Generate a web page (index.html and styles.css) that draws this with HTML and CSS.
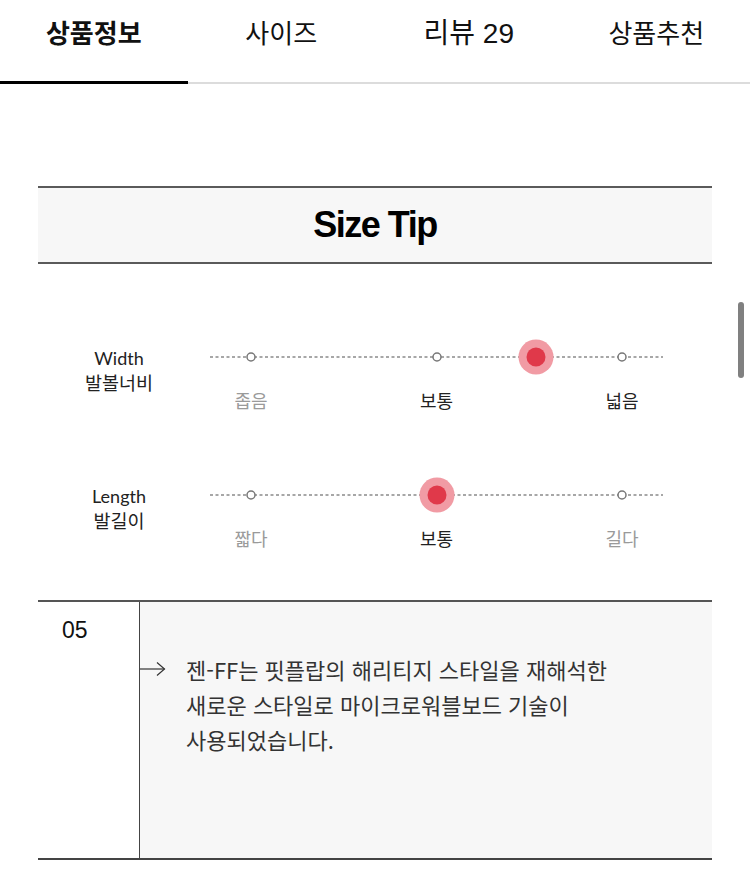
FILE: index.html
```html
<!DOCTYPE html>
<html lang="ko">
<head>
<meta charset="utf-8">
<link rel="stylesheet" href="styles.css">
</head>
<body>
<nav class="tabs">
  <div class="tab active">상품정보</div>
  <div class="tab">사이즈</div>
  <div class="tab"><span class="lat">리뷰 29</span></div>
  <div class="tab">상품추천</div>
</nav>

<section class="tip-head">
  <h2 class="tip-title">Size Tip</h2>
</section>

<section class="rows">
  <div class="row">
    <div class="row-label"><div class="en">Width</div><div class="ko">발볼너비</div></div>
    <div class="slider">
      <svg class="track" width="453" height="36" viewBox="0 0 453 36">
        <line x1="0" y1="18" x2="453" y2="18" stroke="#8a8a8a" stroke-width="1.5" stroke-dasharray="3 2.5"/>
        <circle cx="41" cy="18" r="4" fill="#fff" stroke="#777" stroke-width="1.5"/>
        <circle cx="227" cy="18" r="4" fill="#fff" stroke="#777" stroke-width="1.5"/>
        <circle cx="412" cy="18" r="4" fill="#fff" stroke="#777" stroke-width="1.5"/>
        <circle cx="326" cy="18" r="17.5" fill="#f19ba4"/>
        <circle cx="326" cy="18" r="9.5" fill="#e0394a"/>
      </svg>
      <div class="ticks">
        <span class="tick dim">좁음</span>
        <span class="tick">보통</span>
        <span class="tick">넓음</span>
      </div>
    </div>
  </div>
  <div class="row">
    <div class="row-label"><div class="en">Length</div><div class="ko">발길이</div></div>
    <div class="slider">
      <svg class="track" width="453" height="36" viewBox="0 0 453 36">
        <line x1="0" y1="18" x2="453" y2="18" stroke="#8a8a8a" stroke-width="1.5" stroke-dasharray="3 2.5"/>
        <circle cx="41" cy="18" r="4" fill="#fff" stroke="#777" stroke-width="1.5"/>
        <circle cx="412" cy="18" r="4" fill="#fff" stroke="#777" stroke-width="1.5"/>
        <circle cx="227" cy="18" r="17.5" fill="#f19ba4"/>
        <circle cx="227" cy="18" r="9.5" fill="#e0394a"/>
      </svg>
      <div class="ticks">
        <span class="tick dim">짧다</span>
        <span class="tick">보통</span>
        <span class="tick dim">길다</span>
      </div>
    </div>
  </div>
</section>

<section class="point">
  <div class="point-num">05</div>
  <div class="point-body">
    <svg class="arrow" width="26" height="16" viewBox="0 0 26 16">
      <line x1="0" y1="8" x2="24.5" y2="8" stroke="#333" stroke-width="1.2"/>
      <polyline points="17,1.5 24.5,8 17,14.5" fill="none" stroke="#333" stroke-width="1.2"/>
    </svg>
    <p class="point-text">젠-FF는 핏플랍의 해리티지 스타일을 재해석한<br>새로운 스타일로 마이크로워블보드 기술이<br>사용되었습니다.</p>
  </div>
</section>

<div class="scrollbar"></div>
</body>
</html>
```

FILE: styles.css
```css
* { box-sizing: border-box; }
html, body { margin: 0; padding: 0; background: #fff; }
body {
  width: 750px;
  height: 875px;
  overflow: hidden;
  font-family: "Noto Sans CJK KR", "Noto Sans", sans-serif;
  color: #222;
  position: relative;
}

.tabs {
  display: flex;
  height: 84px;
  border-bottom: 2px solid #dcdcdc;
}
.tab {
  flex: 1;
  position: relative;
  text-align: center;
  padding-top: 14px;
  font-size: 26px;
  line-height: 36px;
  color: #111;
}
.tab .lat { font-family: "Liberation Sans", "Noto Sans CJK KR", sans-serif; font-size: 28px; }
.tab.active { font-weight: 700; }
.tab.active::after {
  content: "";
  position: absolute;
  left: 0;
  right: 0;
  bottom: -2px;
  height: 3px;
  background: #000;
}

.tip-head {
  margin: 102px 38px 0;
  height: 78px;
  background: #f7f7f7;
  border-top: 2px solid #5a5a5a;
  border-bottom: 2px solid #5a5a5a;
  display: flex;
  align-items: center;
  justify-content: center;
}
.tip-title {
  margin: 0;
  font-family: "Liberation Sans", Arial, sans-serif;
  font-weight: 700;
  font-size: 36px;
  letter-spacing: -1.5px;
  line-height: 40px;
  color: #000;
}

.rows {
  margin: 75px 38px 0;
  display: flex;
  flex-direction: column;
  gap: 65px;
}
.row { display: flex; }
.row-label {
  width: 162px;
  padding-top: 7px;
  text-align: center;
  font-size: 18.5px;
  line-height: 24px;
  color: #222;
}
.row-label .en { font-family: Lato, "Noto Sans CJK KR", sans-serif; font-size: 18px; }
.slider { margin-left: 10px; width: 453px; }
.track { display: block; }
.ticks {
  margin: 13px 11px 0;
  display: flex;
  justify-content: space-between;
}
.tick {
  width: 60px;
  text-align: center;
  font-size: 18px;
  line-height: 24px;
  color: #222;
}
.tick.dim { color: #9a9a9a; }

.point {
  margin: 50px 38px 0;
  height: 260px;
  border-top: 2px solid #555;
  border-bottom: 2px solid #444;
  display: flex;
}
.point-num {
  width: 102px;
  border-right: 1.5px solid #444;
  padding: 13px 0 0 24px;
  font-family: "Liberation Sans", Arial, sans-serif;
  font-size: 23px;
  line-height: 30px;
  color: #111;
}
.point-body {
  flex: 1;
  background: #f7f7f7;
  display: flex;
  align-items: flex-start;
  padding-top: 50px;
  gap: 20px;
}
.arrow { display: block; margin-top: 9px; flex: none; }
.point-text {
  margin: 0;
  font-size: 22px;
  line-height: 35px;
  color: #333;
}

.scrollbar {
  position: absolute;
  right: 6px;
  top: 302px;
  width: 6px;
  height: 76px;
  border-radius: 3px;
  background: #808080;
}
```
